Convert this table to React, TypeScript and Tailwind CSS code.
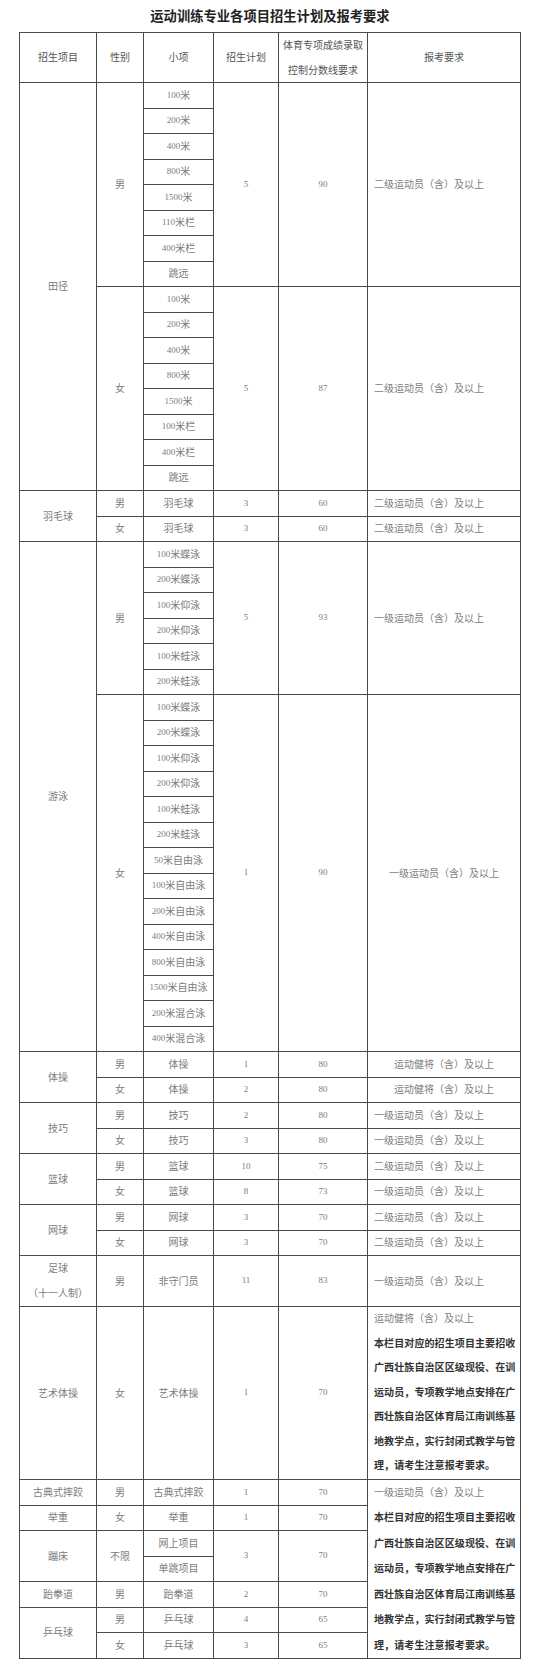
import React from "react";
import clsx from "clsx";

// ============================================================================
// DATA
// ============================================================================

type Sub = {
  gender: string;
  items: string[];
  plan: string;
  score: string;
  req: string;
  center?: boolean;
};

type Group = { name: React.ReactNode; subs: Sub[] };

const ER = "二级运动员（含）及以上";
const YI = "一级运动员（含）及以上";
const JJ = "运动健将（含）及以上";

const groups: Group[] = [
  {
    name: "田径",
    subs: [
      {
        gender: "男",
        items: ["100米", "200米", "400米", "800米", "1500米", "110米栏", "400米栏", "跳远"],
        plan: "5",
        score: "90",
        req: ER,
      },
      {
        gender: "女",
        items: ["100米", "200米", "400米", "800米", "1500米", "100米栏", "400米栏", "跳远"],
        plan: "5",
        score: "87",
        req: ER,
      },
    ],
  },
  {
    name: "羽毛球",
    subs: [
      { gender: "男", items: ["羽毛球"], plan: "3", score: "60", req: ER },
      { gender: "女", items: ["羽毛球"], plan: "3", score: "60", req: ER },
    ],
  },
  {
    name: "游泳",
    subs: [
      {
        gender: "男",
        items: ["100米蝶泳", "200米蝶泳", "100米仰泳", "200米仰泳", "100米蛙泳", "200米蛙泳"],
        plan: "5",
        score: "93",
        req: YI,
      },
      {
        gender: "女",
        items: [
          "100米蝶泳", "200米蝶泳", "100米仰泳", "200米仰泳", "100米蛙泳", "200米蛙泳",
          "50米自由泳", "100米自由泳", "200米自由泳", "400米自由泳", "800米自由泳",
          "1500米自由泳", "200米混合泳", "400米混合泳",
        ],
        plan: "1",
        score: "90",
        req: YI,
        center: true,
      },
    ],
  },
  {
    name: "体操",
    subs: [
      { gender: "男", items: ["体操"], plan: "1", score: "80", req: JJ, center: true },
      { gender: "女", items: ["体操"], plan: "2", score: "80", req: JJ, center: true },
    ],
  },
  {
    name: "技巧",
    subs: [
      { gender: "男", items: ["技巧"], plan: "2", score: "80", req: YI },
      { gender: "女", items: ["技巧"], plan: "3", score: "80", req: YI },
    ],
  },
  {
    name: "篮球",
    subs: [
      { gender: "男", items: ["篮球"], plan: "10", score: "75", req: ER },
      { gender: "女", items: ["篮球"], plan: "8", score: "73", req: YI },
    ],
  },
  {
    name: "网球",
    subs: [
      { gender: "男", items: ["网球"], plan: "3", score: "70", req: ER },
      { gender: "女", items: ["网球"], plan: "3", score: "70", req: ER },
    ],
  },
  {
    name: (
      <div className="flex flex-col items-center leading-[25px]">
        <span>足球</span>
        <span>（十一人制）</span>
      </div>
    ),
    subs: [{ gender: "男", items: ["非守门员"], plan: "11", score: "83", req: YI }],
  },
];

const note = [
  "本栏目对应的招生项目主要招收",
  "广西壮族自治区区级现役、在训",
  "运动员，专项教学地点安排在广",
  "西壮族自治区体育局江南训练基",
  "地教学点，实行封闭式教学与管",
  "理，请考生注意报考要求。",
];

// ============================================================================
// CELLS
// ============================================================================

const spans: Record<number, string> = {
  1: "row-span-1",
  2: "row-span-2",
  6: "row-span-6",
  7: "row-span-7",
  8: "row-span-8",
  14: "row-span-[14]",
  16: "row-span-[16]",
  20: "row-span-[20]",
};

// digits are set a bit smaller, like the Times numerals in the source
const Txt: React.FC<{ s: React.ReactNode }> = ({ s }) => {
  if (typeof s !== "string") return <>{s}</>;
  return (
    <>
      {s.split(/(\d+)/).map((part, i) =>
        /^\d+$/.test(part) ? (
          <span key={i} className="text-[9px]">
            {part}
          </span>
        ) : (
          <React.Fragment key={i}>{part}</React.Fragment>
        )
      )}
    </>
  );
};

const Cell: React.FC<{
  rows?: number;
  left?: boolean;
  sub?: boolean;
  head?: boolean;
  children?: React.ReactNode;
}> = ({ rows = 1, left = false, sub = false, head = false, children }) => (
  <div
    className={clsx(
      "flex items-center whitespace-nowrap border-[#4a4a4a]",
      spans[rows],
      left ? "justify-start pl-[6px]" : "justify-center",
      sub ? "border-r-[1.5px] border-b-[1.5px]" : "border-r border-b",
      head ? "text-[#555]" : "text-[#7c7c7c]"
    )}
  >
    <Txt s={children} />
  </div>
);

const Note: React.FC<{ first: string; lead: string }> = ({ first, lead }) => (
  <div className={clsx("flex flex-col", lead)}>
    <span className="text-[#7c7c7c]">{first}</span>
    {note.map((line) => (
      <span key={line} className="font-bold tracking-[0.1px] text-[#333]">
        {line}
      </span>
    ))}
  </div>
);

// ============================================================================
// COMPONENT
// ============================================================================

const App: React.FC = () => {
  const cells: React.ReactNode[] = [];

  groups.forEach((group, gi) => {
    const total = group.subs.reduce((n, s) => n + s.items.length, 0);
    group.subs.forEach((s, si) => {
      const rows = s.items.length;
      s.items.forEach((item, ii) => {
        if (si === 0 && ii === 0)
          cells.push(
            <Cell key={`g${gi}`} rows={total}>
              {group.name}
            </Cell>
          );
        if (ii === 0)
          cells.push(
            <Cell key={`s${gi}-${si}`} rows={rows}>
              {s.gender}
            </Cell>
          );
        cells.push(
          <Cell key={`i${gi}-${si}-${ii}`} sub={rows > 2}>
            {item}
          </Cell>
        );
        if (ii === 0) {
          cells.push(
            <Cell key={`p${gi}-${si}`} rows={rows}>
              {s.plan}
            </Cell>,
            <Cell key={`c${gi}-${si}`} rows={rows}>
              {s.score}
            </Cell>,
            <Cell key={`r${gi}-${si}`} rows={rows} left={!s.center}>
              {s.req}
            </Cell>
          );
        }
      });
    });
  });

  return (
    <div className="min-h-[1675px] w-[540px] bg-white font-['Liberation_Serif','Noto_Sans_CJK_SC',serif] text-[10px]">
      <h1 className="flex h-[32px] items-center justify-center font-['Noto_Sans_CJK_SC',sans-serif] text-[13.3px] font-bold text-[#222]">
        运动训练专业各项目招生计划及报考要求
      </h1>

      <div className="ml-[19px] grid w-[502px] grid-cols-[77px_47px_70px_65px_89px_153px] grid-rows-[50px_repeat(46,25.5px)_51px_173px_repeat(7,25.5px)] border-l border-t border-[#4a4a4a]">
        {/* header */}
        <Cell head>招生项目</Cell>
        <Cell head>性别</Cell>
        <Cell head>小项</Cell>
        <Cell head>招生计划</Cell>
        <Cell head>
          <div className="flex flex-col items-center leading-[25px]">
            <span>体育专项成绩录取</span>
            <span>控制分数线要求</span>
          </div>
        </Cell>
        <Cell head>报考要求</Cell>

        {cells}

        {/* 艺术体操 */}
        <Cell>艺术体操</Cell>
        <Cell>女</Cell>
        <Cell>艺术体操</Cell>
        <Cell>1</Cell>
        <Cell>70</Cell>
        <Cell left>
          <Note first={JJ} lead="leading-[24.5px]" />
        </Cell>

        {/* 合并报考要求 */}
        <Cell>古典式摔跤</Cell>
        <Cell>男</Cell>
        <Cell>古典式摔跤</Cell>
        <Cell>1</Cell>
        <Cell>70</Cell>
        <Cell rows={7} left>
          <Note first={YI} lead="leading-[25.5px]" />
        </Cell>

        <Cell>举重</Cell>
        <Cell>女</Cell>
        <Cell>举重</Cell>
        <Cell>1</Cell>
        <Cell>70</Cell>

        <Cell rows={2}>蹦床</Cell>
        <Cell rows={2}>不限</Cell>
        <Cell>网上项目</Cell>
        <Cell rows={2}>3</Cell>
        <Cell rows={2}>70</Cell>
        <Cell>单跳项目</Cell>

        <Cell>跆拳道</Cell>
        <Cell>男</Cell>
        <Cell>跆拳道</Cell>
        <Cell>2</Cell>
        <Cell>70</Cell>

        <Cell rows={2}>乒乓球</Cell>
        <Cell>男</Cell>
        <Cell>乒乓球</Cell>
        <Cell>4</Cell>
        <Cell>65</Cell>
        <Cell>女</Cell>
        <Cell>乒乓球</Cell>
        <Cell>3</Cell>
        <Cell>65</Cell>
      </div>
    </div>
  );
};

export default App;
